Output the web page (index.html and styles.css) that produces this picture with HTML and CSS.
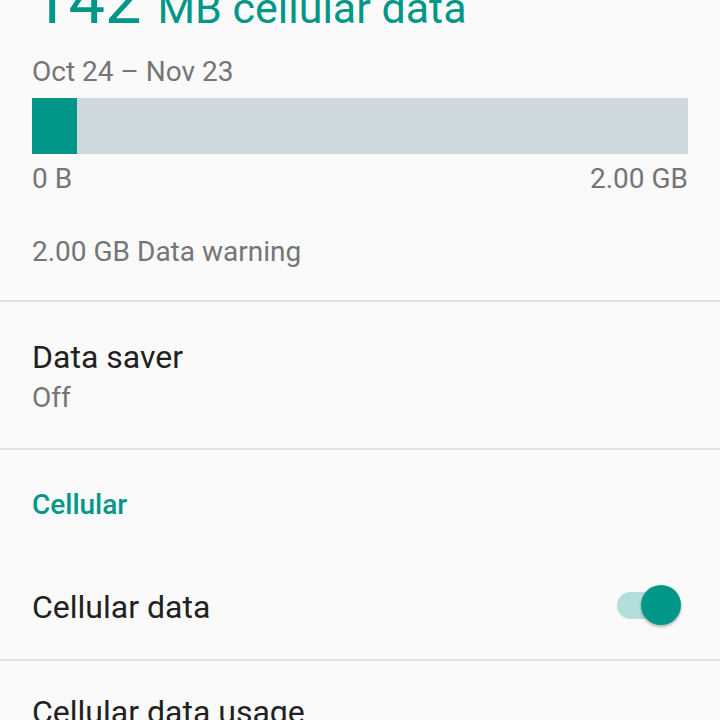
FILE: index.html
```html
<!DOCTYPE html>
<html lang="en">
<head>
<meta charset="utf-8">
<title>Data usage</title>
<link rel="stylesheet" href="styles.css">
</head>
<body>
<main class="screen">
  <section class="summary">
    <div class="usage-title"><span class="usage-num">142</span> <span class="usage-unit">MB cellular data</span></div>
    <div class="period">Oct 24 – Nov 23</div>
    <div class="bar"><div class="bar-fill" style="width: 6.9%"></div></div>
    <div class="bar-labels"><span>0 B</span><span>2.00 GB</span></div>
    <div class="warning">2.00 GB Data warning</div>
  </section>
  <div class="divider"></div>
  <section class="pref">
    <div class="pref-title">Data saver</div>
    <div class="pref-summary">Off</div>
  </section>
  <div class="divider"></div>
  <section class="category">
    <div class="category-title">Cellular</div>
    <div class="pref-row">
      <div class="pref-title row-title">Cellular data</div>
      <div class="switch"><div class="switch-track"></div><div class="switch-thumb"></div></div>
    </div>
  </section>
  <div class="divider"></div>
  <section class="pref pref-next">
    <div class="pref-title">Cellular data usage</div>
  </section>
</main>
</body>
</html>
```

FILE: styles.css
```css
html, body {
  margin: 0;
  padding: 0;
  background: #fafafa;
}
body {
  font-family: Roboto, "Noto Sans", "Liberation Sans", sans-serif;
  width: 720px;
  height: 720px;
  overflow: hidden;
}
.screen {
  display: flex;
  flex-direction: column;
}
.summary {
  padding: 0 32px 28px;
  display: flex;
  flex-direction: column;
}
.usage-title {
  margin-top: -31px;
  font-size: 64px;
  line-height: 64px;
  color: #009688;
  white-space: nowrap;
}
.usage-num {
  font-size: 65px;
}
.usage-unit {
  font-size: 43px;
}
.period {
  margin-top: 12px;
  font-size: 28px;
  line-height: 40px;
  color: #757575;
}
.bar {
  margin-top: 6px;
  height: 56px;
  background: #cfd8dc;
  display: flex;
}
.bar-fill {
  background: #009688;
  height: 100%;
}
.bar-labels {
  margin-top: 5px;
  display: flex;
  justify-content: space-between;
  font-size: 28px;
  line-height: 40px;
  color: #757575;
}
.warning {
  margin-top: 33px;
  font-size: 28px;
  line-height: 40px;
  color: #757575;
}
.divider {
  height: 2px;
  background: #e0e0e0;
}
.pref {
  padding: 36px 32px 31px;
}
.pref-title {
  font-size: 32px;
  line-height: 38px;
  color: #212121;
}
.pref-summary {
  margin-top: 3px;
  font-size: 28px;
  line-height: 38px;
  color: #757575;
}
.category {
  display: flex;
  flex-direction: column;
}
.category-title {
  padding: 35px 32px 26px;
  font-size: 28px;
  line-height: 40px;
  font-weight: 500;
  color: #009688;
}
.pref-row {
  height: 108px;
  padding: 0 32px;
  display: flex;
  align-items: center;
  justify-content: space-between;
}
.row-title {
  margin-top: 4px;
}
.switch {
  position: relative;
  width: 64px;
  height: 40px;
  margin-right: 7px;
}
.switch-track {
  position: absolute;
  left: 0;
  top: 7px;
  width: 60px;
  height: 27px;
  border-radius: 14px;
  background: #b2dfdb;
}
.switch-thumb {
  position: absolute;
  right: 0;
  top: 0;
  width: 40px;
  height: 40px;
  border-radius: 50%;
  background: #009688;
  box-shadow: 0 2px 3px rgba(0, 0, 0, 0.28);
}
.pref-next {
  padding-top: 32px;
}
```
